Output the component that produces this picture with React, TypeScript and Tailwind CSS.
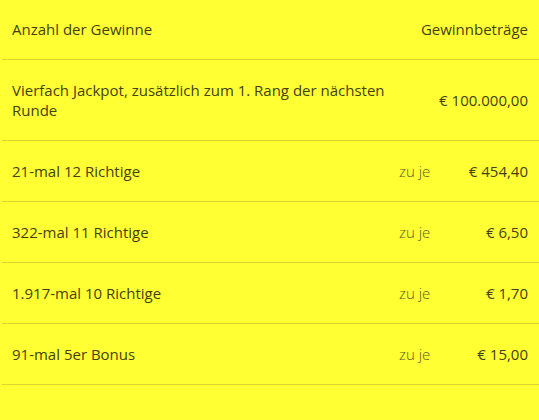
const rows = [
  { label: "21-mal 12 Richtige", amount: "€ 454,40" },
  { label: "322-mal 11 Richtige", amount: "€ 6,50" },
  { label: "1.917-mal 10 Richtige", amount: "€ 1,70" },
  { label: "91-mal 5er Bonus", amount: "€ 15,00" },
];

export default function App() {
  return (
    <div
      className="min-h-screen w-full bg-[#ffff33] text-[#45420f] text-[15px]"
      style={{ fontFamily: "'Open Sans', Lato, sans-serif" }}
    >
      <div className="ml-[2px]">
        {/* header */}
        <div className="flex h-[60px] items-center border-b border-[#d8d62c] pl-[10px] pr-[11px]">
          <div className="flex-1">Anzahl der Gewinne</div>
          <div className="text-right">Gewinnbeträge</div>
        </div>

        {/* jackpot */}
        <div className="flex h-[81px] items-center border-b border-[#d8d62c] pl-[10px] pr-[11px]">
          <div className="w-[390px] leading-[20px]">
            Vierfach Jackpot, zusätzlich zum 1. Rang der nächsten Runde
          </div>
          <div className="flex-1 text-right">€ 100.000,00</div>
        </div>

        {rows.map((r) => (
          <div
            key={r.label}
            className="flex h-[61px] items-center border-b border-[#d8d62c] pl-[10px] pr-[11px]"
          >
            <div className="w-[387px]">{r.label}</div>
            <div className="w-[40px] font-light text-[#5e5b22]">zu je</div>
            <div className="flex-1 text-right font-medium">{r.amount}</div>
          </div>
        ))}
      </div>
    </div>
  );
}
